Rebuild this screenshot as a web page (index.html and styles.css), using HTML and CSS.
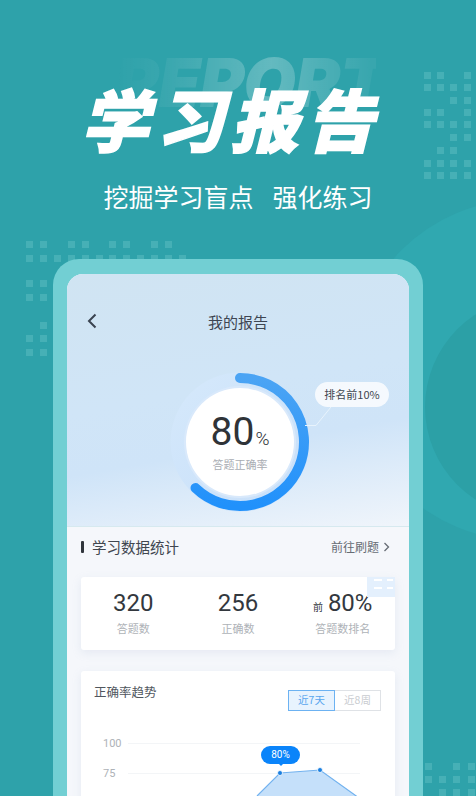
FILE: index.html
```html
<!DOCTYPE html>
<html lang="zh-CN">
<head>
<meta charset="utf-8">
<title>学习报告</title>
<link rel="stylesheet" href="styles.css">
</head>
<body>
<main class="screen">
  <div class="blob blob-large"></div>
  <div class="blob blob-small"></div>
  <svg class="dots" width="476" height="796" viewBox="0 0 476 796" aria-hidden="true">
    <path d="M424 72h7v7h-7zM437 72h7v7h-7zM464 72h7v7h-7zM424 84h7v7h-7zM437 84h7v7h-7zM450 84h7v7h-7zM464 84h7v7h-7zM450 97h7v7h-7zM464 97h7v7h-7zM424 109h7v7h-7zM437 109h7v7h-7zM464 109h7v7h-7zM424 121h7v7h-7zM437 121h7v7h-7zM450 121h7v7h-7zM464 121h7v7h-7zM450 134h7v7h-7zM464 134h7v7h-7zM437 147h7v7h-7zM450 147h7v7h-7zM424 160h7v7h-7zM437 160h7v7h-7zM450 160h7v7h-7zM464 160h7v7h-7zM424 172h7v7h-7zM437 172h7v7h-7zM450 172h7v7h-7zM464 172h7v7h-7z"/>
    <path d="M26 241h7v7h-7zM40 241h7v7h-7zM68 241h7v7h-7zM82 241h7v7h-7zM109 241h7v7h-7zM123 241h7v7h-7zM151 241h7v7h-7zM165 241h7v7h-7zM26 255h7v7h-7zM40 255h7v7h-7zM54 255h7v7h-7zM68 255h7v7h-7zM82 255h7v7h-7zM96 255h7v7h-7zM109 255h7v7h-7zM123 255h7v7h-7zM137 255h7v7h-7zM151 255h7v7h-7zM165 255h7v7h-7zM179 255h7v7h-7zM26 280h7v7h-7zM40 280h7v7h-7zM26 294h7v7h-7zM40 294h7v7h-7zM40 322h7v7h-7zM26 335h7v7h-7zM40 335h7v7h-7zM26 349h7v7h-7zM40 349h7v7h-7z"/>
    <path d="M425 763h7v7h-7zM453 763h7v7h-7zM468 763h7v7h-7zM425 776h7v7h-7zM439 776h7v7h-7zM453 776h7v7h-7zM468 776h7v7h-7zM439 789h7v7h-7zM453 789h7v7h-7zM468 789h7v7h-7z"/>
  </svg>

  <header class="hero">
    <div class="watermark">REPORT</div>
    <h1 class="headline">学习报告</h1>
    <p class="tagline"><span>挖掘学习盲点</span><span>强化练习</span></p>
  </header>

  <section class="frame">
    <div class="phone">
      <div class="report">
        <nav class="nav">
          <svg class="back" width="12" height="16" viewBox="0 0 12 16" aria-hidden="true"><path d="M9.5 1.5 3 8l6.5 6.5"/></svg>
          <h2 class="nav-title">我的报告</h2>
        </nav>
        <div class="gauge-wrap">
          <div class="gauge">
            <svg class="gauge-ring" width="140" height="140" viewBox="0 0 140 140" aria-hidden="true">
              <defs>
                <linearGradient id="track" x1="0" y1="0" x2="1" y2="1">
                  <stop offset="0" stop-color="#d6e9fb"/>
                  <stop offset="1" stop-color="#c5defa"/>
                </linearGradient>
                <linearGradient id="arc" x1="0" y1="0" x2="0" y2="1">
                  <stop offset="0" stop-color="#4ba4f4"/>
                  <stop offset="1" stop-color="#2191fb"/>
                </linearGradient>
              </defs>
              <circle class="track-disc" cx="70" cy="70" r="69.5" fill="url(#track)"/>
              <circle class="inner-halo" cx="70" cy="70" r="56"/>
              <circle class="inner-disc" cx="70" cy="70" r="54"/>
              <path class="arc" d="M70 6A64 64 0 1 1 25.500 116" stroke="url(#arc)"/>
            </svg>
            <div class="gauge-value"><span class="gauge-num">80</span><span class="gauge-pct">%</span></div>
            <div class="gauge-label">答题正确率</div>
          </div>
          <svg class="leader" width="32" height="22" viewBox="0 0 32 22" aria-hidden="true"><path d="M0 19.500h11L26 1"/></svg>
          <div class="rank-pill">排名前10%</div>
        </div>
      </div>

      <div class="stats">
        <div class="stats-head">
          <div class="stats-title"><i class="stats-bar"></i>学习数据统计</div>
          <div class="stats-link">前往刷题
            <svg width="7" height="10" viewBox="0 0 7 10" aria-hidden="true"><path d="M1.500 1 5.500 5l-4 4"/></svg>
          </div>
        </div>

        <div class="stat-card">
          <svg class="stat-corner" width="28" height="20" viewBox="0 0 28 20" aria-hidden="true">
            <rect width="28" height="20"/>
            <path d="M7 2h8v2H7zM7 10h8v2H7zM20 2h6v2h-6zM20 10h6v2h-6z"/>
          </svg>
          <div class="stat"><div class="stat-num">320</div><div class="stat-label">答题数</div></div>
          <div class="stat"><div class="stat-num">256</div><div class="stat-label">正确数</div></div>
          <div class="stat"><div class="stat-num"><small>前</small>80%</div><div class="stat-label">答题数排名</div></div>
        </div>

        <div class="chart-card">
          <div class="chart-head">
            <h3 class="chart-title">正确率趋势</h3>
            <div class="toggle"><span class="toggle-item is-active">近7天</span><span class="toggle-item">近8周</span></div>
          </div>
          <div class="chart">
            <div class="bubble">80%</div>
            <svg class="chart-svg" width="314" height="110" viewBox="0 0 314 110" aria-hidden="true">
              <path class="grid" d="M47 8.500h232M47 38.500h232M47 68.500h232"/>
              <text class="tick" x="22" y="12">100</text>
              <text class="tick" x="22" y="42">75</text>
              <path class="area" d="M176 61 199 38 239 35 285 68 176 68Z"/>
              <path class="area-line" d="M176 61 199 38 239 35 285 68"/>
              <circle class="pt" cx="199" cy="38" r="2.500"/>
              <circle class="pt" cx="239" cy="35" r="2.500"/>
            </svg>
          </div>
        </div>
      </div>
    </div>
  </section>
</main>
</body>
</html>
```

FILE: styles.css
```css
* { box-sizing: border-box; }
html, body { margin: 0; padding: 0; }
body { font-family: "Noto Sans CJK SC", "Noto Sans", sans-serif; }

.screen {
  position: relative;
  width: 476px;
  height: 796px;
  overflow: hidden;
  background: #2ea2aa;
}
.blob { position: absolute; border-radius: 50%; }
.blob-large { left: 352px; top: 200px; width: 340px; height: 340px; background: #30a8b0; }
.blob-small { left: 425px; top: 297px; width: 220px; height: 220px; background: #2ca0a6; }
.dots { position: absolute; left: 0; top: 0; fill: #4fb5bb; opacity: .75; }

.hero { position: relative; height: 259px; display: flex; flex-direction: column; align-items: center; }
.watermark {
  position: absolute;
  left: 114px;
  top: 42px;
  width: 262px;
  font-family: Inter, "Liberation Sans", sans-serif;
  font-size: 68px;
  font-weight: 900;
  font-style: italic;
  line-height: 80px;
  white-space: nowrap;
  letter-spacing: -1px;
  background: linear-gradient(90deg, rgba(255,255,255,0) 0%, rgba(255,255,255,.06) 20%, rgba(255,255,255,.26) 60%, rgba(255,255,255,.05) 98%);
  -webkit-background-clip: text;
  background-clip: text;
  color: transparent;
}
.headline {
  position: relative;
  margin: 72px 0 0;
  height: 92px;
  font-size: 68px;
  line-height: 92px;
  font-weight: 900;
  letter-spacing: 7px;
  color: #fff;
  white-space: nowrap;
  -webkit-text-stroke: 1.5px #fff;
  transform: skewX(-14deg);
}
.tagline {
  position: relative;
  margin: 14px 0 0;
  display: flex;
  gap: 19px;
  font-size: 25px;
  line-height: 36px;
  font-weight: 400;
  color: #fff;
  white-space: nowrap;
}

.frame {
  position: relative;
  margin: 0 53px;
  height: 560px;
  padding: 15px 14px 0;
  background: #72cfd3;
  border-radius: 26px 26px 0 0;
}
.phone { height: 100%; border-radius: 16px 16px 0 0; overflow: hidden; background: #f5f7fb; }

.report {
  height: 253px;
  background: linear-gradient(170deg, #d0e4f2 0%, #d0e5f7 45%, #cfe4f8 65%, #f0f5fb 100%);
  border-bottom: 1px solid #d6e9ef;
}
.nav { position: relative; display: flex; justify-content: center; padding-top: 37px; height: 98px; }
.back { position: absolute; left: 19px; top: 39px; fill: none; stroke: #3a4350; stroke-width: 2; }
.nav-title { margin: 0; font-size: 15px; line-height: 22px; font-weight: 400; color: #3e4652; }

.gauge-wrap { position: relative; display: flex; justify-content: center; padding-left: 4px; }
.gauge {
  position: relative;
  width: 140px;
  height: 140px;
  display: flex;
  flex-direction: column;
  align-items: center;
  padding-top: 37px;
}
.gauge-ring { position: absolute; left: 0; top: 0; }
.track-disc { opacity: .95; }
.inner-halo { fill: #d9e9fb; }
.inner-disc { fill: #fff; }
.arc { fill: none; stroke-width: 10; stroke-linecap: round; }
.gauge-value { position: relative; display: flex; align-items: baseline; color: #2f3338; line-height: 46px; height: 46px; }
.gauge-num { font-family: "Liberation Sans Narrow", Roboto, sans-serif; font-size: 39px; }
.gauge-pct { font-family: Roboto, sans-serif; font-size: 19px; font-weight: 300; margin-left: 1px; }
.gauge-label { position: relative; margin-top: 1px; font-size: 11px; line-height: 16px; color: #a9adb3; }

.leader { position: absolute; left: 243px; top: 9px; fill: none; stroke: #e8f3fc; stroke-width: 1; }
.rank-pill {
  position: absolute;
  left: 248px;
  top: 10px;
  width: 74px;
  height: 25px;
  border-radius: 13px;
  background: rgba(255,255,255,.78);
  font-size: 11px;
  line-height: 25px;
  text-align: center;
  color: #3f4650;
  white-space: nowrap;
}
.leader { top: 34px; left: 238px; }

.stats { padding: 0 14px; }
.stats-head { display: flex; justify-content: space-between; align-items: center; height: 37px; padding-top: 2px; }
.stats-title { display: flex; align-items: center; font-size: 14.500px; color: #40464f; line-height: 20px; }
.stats-bar { width: 3px; height: 12px; border-radius: 1px; background: #30353c; margin-right: 8px; }
.stats-link { display: flex; align-items: center; gap: 4px; font-size: 12px; color: #666c74; padding-right: 5px; }
.stats-link svg { fill: none; stroke: #666c74; stroke-width: 1.300; }

.stat-card {
  position: relative;
  margin-top: 13px;
  height: 73px;
  display: grid;
  grid-template-columns: repeat(3, 1fr);
  padding: 13px 0 0;
  background: #fff;
  border-radius: 3px;
  box-shadow: 0 3px 10px rgba(150,170,200,.16);
  text-align: center;
}
.stat-corner { position: absolute; right: 0; top: 0; fill: #fff; }
.stat-corner rect { fill: #e4f0fd; }
.stat-num {
  display: flex;
  align-items: baseline;
  justify-content: center;
  height: 27px;
  font-family: "Liberation Sans Narrow", Roboto, sans-serif;
  font-size: 24px;
  line-height: 27px;
  color: #33383e;
}
.stat-num small { font-family: "Noto Sans CJK SC", sans-serif; font-size: 10px; margin-right: 5px; }
.stat-label { margin-top: 3px; font-size: 11px; line-height: 16px; color: #aeb2b7; }

.chart-card {
  margin-top: 21px;
  height: 200px;
  padding: 11px 14px 0 13px;
  background: #fff;
  border-radius: 3px;
  box-shadow: 0 3px 10px rgba(150,170,200,.16);
  position: relative;
}
.chart-head { display: flex; justify-content: space-between; align-items: flex-start; }
.chart-title { margin: 0; font-size: 12.500px; line-height: 20px; font-weight: 400; color: #50565e; }
.toggle { display: flex; margin-top: 8px; height: 21px; }
.toggle-item {
  width: 47px;
  border: 1px solid #dfe2e6;
  font-size: 10.500px;
  line-height: 18px;
  text-align: center;
  color: #c9ccd0;
  margin-left: -1px;
}
.toggle-item.is-active { border-color: #6cb2f2; background: #e8f3fe; color: #58a6ee; position: relative; }

.chart { position: absolute; left: 0; top: 64px; width: 314px; }
.chart-svg { display: block; }
.grid { fill: none; stroke: #f3f5f7; stroke-width: 1; }
.tick { font-family: Roboto, sans-serif; font-size: 11px; fill: #aeb2b7; }
.area { fill: #c5e0fa; }
.area-line { fill: none; stroke: #72b2ef; stroke-width: 1.200; }
.pt { fill: #1a7fe0; stroke: #fff; stroke-width: .8; }
.bubble {
  position: absolute;
  left: 180px;
  top: 11px;
  width: 39px;
  height: 18px;
  border-radius: 9px;
  background: #0a84fa;
  color: #fff;
  font-family: Roboto, sans-serif;
  font-size: 10px;
  line-height: 18px;
  text-align: center;
}
.bubble::after {
  content: "";
  position: absolute;
  left: 17px;
  top: 17px;
  border: 3px solid transparent;
  border-top-color: #0a84fa;
  border-bottom: 0;
}
```
